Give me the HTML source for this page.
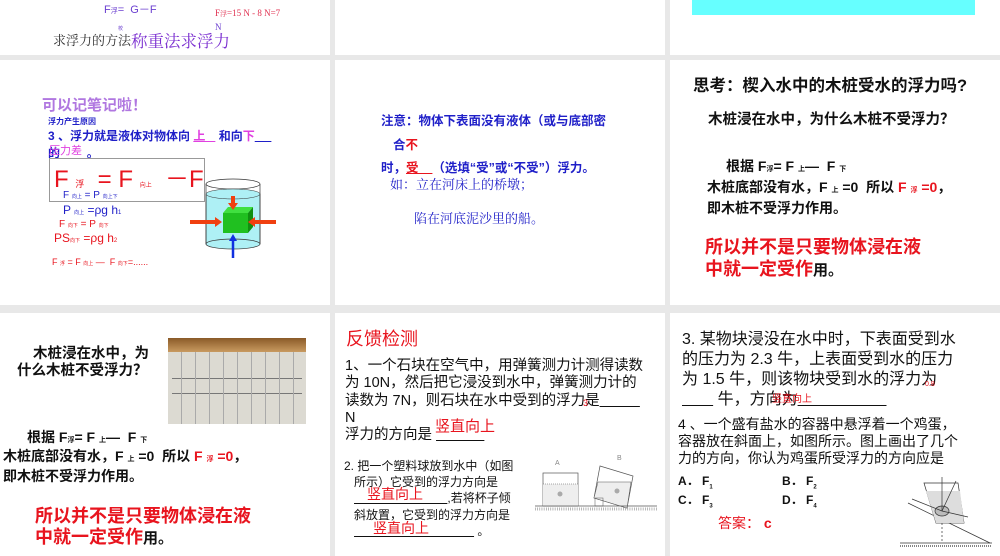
<!DOCTYPE html>
<html><head><meta charset="utf-8"><style>
*{margin:0;padding:0;box-sizing:border-box}
body{width:1000px;height:556px;background:#e8e8e8;position:relative;overflow:hidden;font-family:"Liberation Sans","Noto Sans CJK SC",sans-serif}
.p{position:absolute;background:#fff;overflow:hidden}
.t{position:absolute;white-space:nowrap}
.b{font-weight:bold}
.s{font-size:7px}
.red{color:#e8141e}
.u{text-decoration:underline}
.serif{font-family:'Liberation Serif','Noto Serif CJK SC',serif}
</style></head><body>
<!-- row 1 -->
<div class="p" style="left:0;top:0;width:330px;height:55px">
 <div class="t" style="left:104px;top:1px;font-size:11px;color:#6b3fd0">F<span class="s">浮</span>=&nbsp; G－F</div>
 <div class="t serif" style="left:215px;top:8px;font-size:9px;color:#e03050">F<span class="s">浮</span>=15 N - 8 N=7</div>
 <div class="t serif" style="left:215px;top:22px;font-size:9px;color:#6b3fd0">N</div>
 <div class="t" style="left:118px;top:25px;font-size:5px;color:#6b3fd0">校</div>
 <div class="t serif" style="left:53px;top:30px;font-size:13px;color:#333">求浮力的方法</div>
 <div class="t serif" style="left:131px;top:28px;font-size:16.5px;color:#7b2fd0">称重法求浮力</div>
</div>
<div class="p" style="left:335px;top:0;width:330px;height:55px"></div>
<div class="p" style="left:670px;top:0;width:330px;height:55px">
 <div style="position:absolute;left:22px;top:0;width:283px;height:15px;background:#66ffff"></div>
</div>
<!-- row 2 -->
<div class="p" style="left:0;top:60px;width:330px;height:245px">
 <div class="t b" style="left:42px;top:34px;font-size:15px;color:#b077e0">可以记笔记啦！</div>
 <div class="t b" style="left:48px;top:56px;font-size:8px;color:#1f1fc8">浮力产生原因</div>
 <div class="t b" style="left:48px;top:67px;font-size:12px;color:#1f1fc8">3 、浮力就是液体对物体向 <span style="color:#e040e0" class="u">上&nbsp;&nbsp;&nbsp;</span> 和向<span style="color:#e040e0">下</span><span class="u">&nbsp;&nbsp;&nbsp;&nbsp;&nbsp;</span></div>
 <div class="t b" style="left:48px;top:84px;font-size:12px;color:#1f1fc8">的<span class="u">&nbsp;&nbsp;&nbsp;&nbsp;&nbsp;&nbsp;&nbsp;</span> 。</div>
 <div class="t" style="left:49px;top:82px;font-size:11px;color:#e040e0">压力差</div>
 <div style="position:absolute;left:49px;top:98px;width:156px;height:44px;border:1px solid #999"></div>
 <div class="t" style="left:54px;top:99px;font-size:24px;color:#e8141e">F <span style="font-size:9px">浮</span> &nbsp;= F <span style="font-size:6px">向上</span> &nbsp;－F <span style="font-size:6px">向</span></div>
 <div class="t" style="left:63px;top:130px;font-size:10px;color:#1f1fc8">F <span style="font-size:5px">向上</span> = P <span style="font-size:5px">向上下</span></div>
 <div class="t" style="left:63px;top:143px;font-size:12px;color:#1f1fc8">P <span style="font-size:5px">向上</span> =ρg h<span style="font-size:6px">1</span></div>
 <div class="t" style="left:59px;top:159px;font-size:10px;color:#e8141e">F <span style="font-size:5px">向下</span> = P <span style="font-size:5px">向下</span></div>
 <div class="t" style="left:54px;top:171px;font-size:12px;color:#e8141e">PS<span style="font-size:5px">向下</span> =ρg h<span style="font-size:6px">2</span></div>
 <div class="t" style="left:52px;top:197px;font-size:9px;color:#e8141e">F <span style="font-size:5px">浮</span> = F <span style="font-size:5px">向上</span> — &nbsp;F <span style="font-size:5px">向下</span>=......</div>
 <svg style="position:absolute;left:188px;top:118px" width="90" height="82">
  <rect x="18" y="16" width="54" height="50" fill="#aef0f5" stroke="#333" stroke-width="0.7"/>
  <ellipse cx="45" cy="6" rx="27" ry="5" fill="#fff" stroke="#333" stroke-width="0.7"/>
  <ellipse cx="45" cy="16" rx="27" ry="5" fill="#aef0f5" stroke="#333" stroke-width="0.5"/>
  <ellipse cx="45" cy="66" rx="27" ry="5" fill="#aef0f5" stroke="#333" stroke-width="0.7"/>
  <line x1="18" y1="6" x2="18" y2="66" stroke="#333" stroke-width="0.7"/><line x1="72" y1="6" x2="72" y2="66" stroke="#333" stroke-width="0.7"/>
  <polygon points="35,35 60,35 60,55 35,55" fill="#20c020"/><polygon points="35,35 40,29 65,29 60,35" fill="#40e040"/><polygon points="60,35 65,29 65,49 60,55" fill="#109010"/>
  <path d="M45 18 V26" stroke="#f04010" stroke-width="4"/><polygon points="40,25 50,25 45,32" fill="#f04010"/>
  <path d="M2 44 H28" stroke="#f04010" stroke-width="4"/><polygon points="27,39 27,49 34,44" fill="#f04010"/>
  <path d="M88 44 H66" stroke="#f04010" stroke-width="4"/><polygon points="67,39 67,49 60,44" fill="#f04010"/>
  <path d="M45 80 V62" stroke="#1030e0" stroke-width="2.5"/><polygon points="41,63 49,63 45,56" fill="#1030e0"/>
 </svg>
</div>
<div class="p" style="left:335px;top:60px;width:330px;height:245px">
 <div class="t b" style="left:46px;top:50px;font-size:12.5px;color:#1f1fc8">注意：物体下表面没有液体（或与底部密</div>
 <div class="t b" style="left:58px;top:74px;font-size:12.5px;color:#1f1fc8">合<span style="color:#e8141e">不</span></div>
 <div class="t b" style="left:46px;top:97px;font-size:12.5px;color:#1f1fc8">时，<span class="red u">受&nbsp;&nbsp;&nbsp;&nbsp;</span>（选填“受”或“不受”）浮力。</div>
 <div class="t serif" style="left:55px;top:114px;font-size:13px;color:#1f1fc8">如：立在河床上的桥墩；</div>
 <div class="t serif" style="left:79px;top:148px;font-size:13px;color:#1f1fc8">陷在河底泥沙里的船。</div>
</div>
<div class="p" style="left:670px;top:60px;width:330px;height:245px">
 <div class="t b" style="left:23px;top:12px;font-size:16.5px;color:#111">思考：楔入水中的木桩受水的浮力吗?</div>
 <div class="t b" style="left:38px;top:48px;font-size:14.5px;color:#111">木桩浸在水中，为什么木桩不受浮力？</div>
 <div class="t b" style="left:56px;top:96px;font-size:14px;color:#111">根据 F<span class="s">浮</span>= F <span class="s">上</span>— &nbsp;F <span class="s">下</span></div>
 <div class="t b" style="left:37px;top:117px;font-size:14px;color:#111">木桩底部没有水，F <span class="s">上</span> =0 &nbsp;所以 <span class="red">F <span class="s">浮</span> =0</span>，</div>
 <div class="t b" style="left:37px;top:138px;font-size:14px;color:#111">即木桩不受浮力作用。</div>
 <div class="t b" style="left:35px;top:176px;font-size:18px;color:#e8141e;line-height:22px">所以并不是只要物体浸在液<br>中就一定受作<span style="color:#111;font-size:15px">用。</span></div>
</div>
<!-- row 3 -->
<div class="p" style="left:0;top:313px;width:330px;height:243px">
 <div class="t b" style="left:33px;top:29px;font-size:14.5px;color:#111">木桩浸在水中，为</div>
 <div class="t b" style="left:17px;top:46px;font-size:14.5px;color:#111">什么木桩不受浮力？</div>
 <div style="position:absolute;left:168px;top:25px;width:138px;height:86px;background:#dcdad2">
  <div style="height:14px;background:linear-gradient(#8a5a28,#c89a60)"></div>
  <div style="position:absolute;left:4px;top:40px;width:130px;height:1px;background:#777"></div>
  <div style="position:absolute;left:4px;top:55px;width:130px;height:1px;background:#777"></div>
  <div style="position:absolute;left:0;top:14px;width:138px;height:72px;background:repeating-linear-gradient(90deg,transparent 0 13px,#aaa 13px 14px)"></div>
 </div>
 <div class="t b" style="left:27px;top:114px;font-size:14px;color:#111">根据 F<span class="s">浮</span>= F <span class="s">上</span>— &nbsp;F <span class="s">下</span></div>
 <div class="t b" style="left:3px;top:133px;font-size:14px;color:#111">木桩底部没有水，F <span class="s">上</span> =0 &nbsp;所以 <span class="red">F <span class="s">浮</span> =0</span>，</div>
 <div class="t b" style="left:3px;top:153px;font-size:14px;color:#111">即木桩不受浮力作用。</div>
 <div class="t b" style="left:35px;top:193px;font-size:18px;color:#e8141e;line-height:21px">所以并不是只要物体浸在液<br>中就一定受作<span style="color:#111;font-size:15px">用。</span></div>
</div>
<div class="p" style="left:335px;top:313px;width:330px;height:243px">
 <div class="t" style="left:11px;top:12px;font-size:18px;color:#e8141e">反馈检测</div>
 <div style="position:absolute;left:10px;top:45px;font-size:14.5px;color:#111;line-height:17.3px;white-space:nowrap">1、一个石块在空气中，用弹簧测力计测得读数<br>为 10N，然后把它浸没到水中，弹簧测力计的<br>读数为 7N，则石块在水中受到的浮力是<span class="u">&nbsp;&nbsp;&nbsp;&nbsp;&nbsp;&nbsp;&nbsp;&nbsp;&nbsp;&nbsp;</span><br>N<br>浮力的方向是 <span class="u">&nbsp;&nbsp;&nbsp;&nbsp;&nbsp;&nbsp;&nbsp;&nbsp;&nbsp;&nbsp;&nbsp;&nbsp;</span></div>
 <div class="t" style="left:248px;top:85px;font-size:9px;color:#e8141e">3</div>
 <div class="t" style="left:100px;top:102px;font-size:15px;color:#e8141e">竖直向上</div>
 <div style="position:absolute;left:9px;top:145px;font-size:12px;color:#111;line-height:16.2px;white-space:nowrap">2. 把一个塑料球放到水中（如图<br>&nbsp;&nbsp;&nbsp;所示）它受到的浮力方向是<br>&nbsp;&nbsp;&nbsp;<span class="u">&nbsp;&nbsp;&nbsp;&nbsp;&nbsp;&nbsp;&nbsp;&nbsp;&nbsp;&nbsp;&nbsp;&nbsp;&nbsp;&nbsp;&nbsp;&nbsp;&nbsp;&nbsp;&nbsp;&nbsp;&nbsp;&nbsp;&nbsp;&nbsp;&nbsp;&nbsp;&nbsp;&nbsp;</span>,若将杯子倾<br>&nbsp;&nbsp;&nbsp;斜放置，它受到的浮力方向是<br>&nbsp;&nbsp;&nbsp;<span class="u">&nbsp;&nbsp;&nbsp;&nbsp;&nbsp;&nbsp;&nbsp;&nbsp;&nbsp;&nbsp;&nbsp;&nbsp;&nbsp;&nbsp;&nbsp;&nbsp;&nbsp;&nbsp;&nbsp;&nbsp;&nbsp;&nbsp;&nbsp;&nbsp;&nbsp;&nbsp;&nbsp;&nbsp;&nbsp;&nbsp;&nbsp;&nbsp;&nbsp;&nbsp;&nbsp;&nbsp;</span> 。</div>
 <div class="t" style="left:32px;top:171px;font-size:14px;color:#e8141e">竖直向上</div>
 <div class="t" style="left:38px;top:205px;font-size:14px;color:#e8141e">竖直向上</div>
 <svg style="position:absolute;left:198px;top:138px" width="126" height="68" font-size="7" fill="#888">
  <text x="22" y="14">A</text><text x="84" y="9">B</text>
  <rect x="10" y="22" width="35" height="33" fill="none" stroke="#555" stroke-width="0.7"/>
  <rect x="10" y="33" width="35" height="22" fill="#eee" stroke="none"/>
  <line x1="10" y1="33" x2="45" y2="33" stroke="#555" stroke-width="0.5" stroke-dasharray="1,1"/>
  <circle cx="27" cy="43" r="2.5" fill="#aaa"/>
  <polygon points="67,15 100,25 94,57 61,47" fill="none" stroke="#555" stroke-width="0.7"/>
  <polygon points="65,31 98,31 94,57 61,47" fill="#eee" stroke="#555" stroke-width="0.5"/>
  <circle cx="84" cy="40" r="2.5" fill="#aaa"/>
  <rect x="62" y="47" width="8" height="8" fill="none" stroke="#555" stroke-width="0.5"/>
  <line x1="2" y1="55" x2="124" y2="55" stroke="#555" stroke-width="0.7"/>
  <line x1="2" y1="58" x2="124" y2="58" stroke="#999" stroke-width="3" stroke-dasharray="0.7,1.5"/>
 </svg>
</div>
<div class="p" style="left:670px;top:313px;width:330px;height:243px">
 <div style="position:absolute;left:12px;top:17px;font-size:16px;color:#111;line-height:20px;white-space:nowrap">3. 某物块浸没在水中时，下表面受到水<br>的压力为 2.3 牛，上表面受到水的压力<br>为 1.5 牛，则该物块受到水的浮力为<br><span class="u">&nbsp;&nbsp;&nbsp;&nbsp;&nbsp;&nbsp;&nbsp;</span> 牛，方向为<span class="u">&nbsp;&nbsp;&nbsp;&nbsp;&nbsp;&nbsp;&nbsp;&nbsp;&nbsp;&nbsp;&nbsp;&nbsp;&nbsp;&nbsp;&nbsp;&nbsp;&nbsp;&nbsp;&nbsp;&nbsp;</span></div>
 <div class="t" style="left:255px;top:68px;font-size:7px;color:#e8141e">0.8</div>
 <div class="t" style="left:102px;top:77px;font-size:10px;color:#e8141e">竖直向上</div>
 <div style="position:absolute;left:8px;top:103px;font-size:14px;color:#111;line-height:17px;white-space:nowrap">4 、一个盛有盐水的容器中悬浮着一个鸡蛋，<br>容器放在斜面上，如图所示。图上画出了几个<br>力的方向，你认为鸡蛋所受浮力的方向应是</div>
 <div class="t b" style="left:8px;top:159px;font-size:12px;color:#111">A． F<sub style="font-size:6px">1</sub></div>
 <div class="t b" style="left:112px;top:159px;font-size:12px;color:#111">B． F<sub style="font-size:6px">2</sub></div>
 <div class="t b" style="left:8px;top:178px;font-size:12px;color:#111">C． F<sub style="font-size:6px">3</sub></div>
 <div class="t b" style="left:112px;top:178px;font-size:12px;color:#111">D． F<sub style="font-size:6px">4</sub></div>
 <div class="t" style="left:48px;top:200px;font-size:14px;color:#e8141e">答案： <b>c</b></div>
 <svg style="position:absolute;left:228px;top:150px" width="98" height="92" fill="none" stroke="#333" stroke-width="0.7">
  <line x1="2" y1="80" x2="94" y2="80"/><line x1="2" y1="83" x2="94" y2="83" stroke-width="2" stroke-dasharray="0.6,1.4"/>
  <line x1="10" y1="40" x2="92" y2="80"/>
  <polygon points="26,20 38,60 66,60 60,20" fill="#fff"/>
  <polygon points="28,28 38,60 66,60 62,28" fill="#ddd" stroke="none"/>
  <ellipse cx="44" cy="48" rx="7" ry="5" fill="#bbb"/>
  <line x1="44" y1="48" x2="44" y2="14"/><line x1="44" y1="48" x2="58" y2="18"/>
  <line x1="44" y1="48" x2="14" y2="36"/><line x1="44" y1="48" x2="70" y2="54"/>
  <line x1="44" y1="60" x2="44" y2="80" stroke-dasharray="2,2"/>
 </svg>
</div>
</body></html>
